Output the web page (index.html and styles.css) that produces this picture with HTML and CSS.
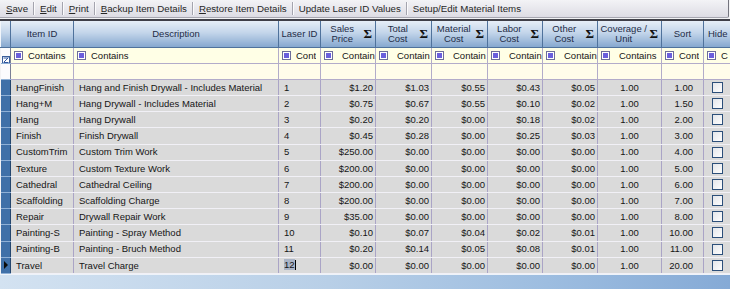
FILE: index.html
```html
<!DOCTYPE html>
<html lang="en">
<head>
<meta charset="UTF-8">
<meta name="viewport" content="width=device-width, initial-scale=1.0">
<title>Item Details</title>
<link rel="stylesheet" href="styles.css">
</head>
<body>
<div class="toolbar">
<span class="tool"><u>S</u>ave</span>
<span class="sep"></span>
<span class="tool"><u>E</u>dit</span>
<span class="sep"></span>
<span class="tool"><u>P</u>rint</span>
<span class="sep"></span>
<span class="tool"><u>B</u>ackup Item Details</span>
<span class="sep"></span>
<span class="tool"><u>R</u>estore Item Details</span>
<span class="sep"></span>
<span class="tool">Update Laser ID Values</span>
<span class="sep"></span>
<span class="tool">Setup/Edit Material Items</span>
</div>

<div class="grid-wrap">
<table class="grid">
<colgroup>
<col class="w-sel">
<col class="w-id">
<col class="w-desc">
<col class="w-laser">
<col class="w-money">
<col class="w-money2">
<col class="w-money2">
<col class="w-money">
<col class="w-money">
<col class="w-cov">
<col class="w-sort">
<col class="w-hide">
</colgroup>
<thead>
<tr class="head">
<th class="sel"></th>
<th>Item ID</th>
<th>Description</th>
<th>Laser ID</th>
<th><div class="hcell"><span>Sales<br>Price</span><b>Σ</b></div></th>
<th><div class="hcell"><span>Total<br>Cost</span><b>Σ</b></div></th>
<th><div class="hcell"><span>Material<br>Cost</span><b>Σ</b></div></th>
<th><div class="hcell"><span>Labor<br>Cost</span><b>Σ</b></div></th>
<th><div class="hcell"><span>Other<br>Cost</span><b>Σ</b></div></th>
<th><div class="hcell"><span>Coverage /<br>Unit</span><b>Σ</b></div></th>
<th>Sort</th>
<th class="left">Hide</th>
</tr>
</thead>
<tbody>
<tr class="filter">
<td class="sel sel-filter"><svg width="8" height="8" viewBox="0 0 8 8"><rect x="0.5" y="0.5" width="7" height="7" fill="#fff" stroke="#3b5f9a"/><path d="M1.5 6.5 L6.5 1.5 M1.5 2 H6 M2 6.5 H6.5" stroke="#2f56a0" stroke-width="1"/></svg></td>
<td><div class="flt"><i class="ico"></i><span>Contains</span></div></td>
<td><div class="flt"><i class="ico"></i><span>Contains</span></div></td>
<td><div class="flt"><i class="ico"></i><span>Cont</span></div></td>
<td><div class="flt wide"><i class="ico"></i><span>Contain</span></div></td>
<td><div class="flt wide"><i class="ico"></i><span>Contain</span></div></td>
<td><div class="flt wide"><i class="ico"></i><span>Contain</span></div></td>
<td><div class="flt wide"><i class="ico"></i><span>Contain</span></div></td>
<td><div class="flt wide"><i class="ico"></i><span>Contain</span></div></td>
<td><div class="flt wide"><i class="ico"></i><span>Contains</span></div></td>
<td><div class="flt"><i class="ico"></i><span>Cont</span></div></td>
<td><div class="flt"><i class="ico"></i><span>C</span></div></td>
</tr>
<tr class="new-row">
<td class="sel sel-new"></td>
<td></td><td></td><td></td><td></td><td></td><td></td><td></td><td></td><td></td><td></td><td></td>
</tr>

<tr class="row">
<td class="sel"></td>
<td>HangFinish</td>
<td>Hang and Finish Drywall - Includes Material</td>
<td>1</td>
<td class="num">$1.20</td><td class="num">$1.03</td><td class="num">$0.55</td><td class="num">$0.43</td><td class="num">$0.05</td>
<td class="cov">1.00</td><td class="sort">1.00</td>
<td><i class="chk"></i></td>
</tr>
<tr class="row">
<td class="sel"></td>
<td>Hang+M</td>
<td>Hang Drywall - Includes Material</td>
<td>2</td>
<td class="num">$0.75</td><td class="num">$0.67</td><td class="num">$0.55</td><td class="num">$0.10</td><td class="num">$0.02</td>
<td class="cov">1.00</td><td class="sort">1.50</td>
<td><i class="chk"></i></td>
</tr>
<tr class="row">
<td class="sel"></td>
<td>Hang</td>
<td>Hang Drywall</td>
<td>3</td>
<td class="num">$0.20</td><td class="num">$0.20</td><td class="num">$0.00</td><td class="num">$0.18</td><td class="num">$0.02</td>
<td class="cov">1.00</td><td class="sort">2.00</td>
<td><i class="chk"></i></td>
</tr>
<tr class="row">
<td class="sel"></td>
<td>Finish</td>
<td>Finish Drywall</td>
<td>4</td>
<td class="num">$0.45</td><td class="num">$0.28</td><td class="num">$0.00</td><td class="num">$0.25</td><td class="num">$0.03</td>
<td class="cov">1.00</td><td class="sort">3.00</td>
<td><i class="chk"></i></td>
</tr>
<tr class="row">
<td class="sel"></td>
<td>CustomTrim</td>
<td>Custom Trim Work</td>
<td>5</td>
<td class="num">$250.00</td><td class="num">$0.00</td><td class="num">$0.00</td><td class="num">$0.00</td><td class="num">$0.00</td>
<td class="cov">1.00</td><td class="sort">4.00</td>
<td><i class="chk"></i></td>
</tr>
<tr class="row">
<td class="sel"></td>
<td>Texture</td>
<td>Custom Texture Work</td>
<td>6</td>
<td class="num">$200.00</td><td class="num">$0.00</td><td class="num">$0.00</td><td class="num">$0.00</td><td class="num">$0.00</td>
<td class="cov">1.00</td><td class="sort">5.00</td>
<td><i class="chk"></i></td>
</tr>
<tr class="row">
<td class="sel"></td>
<td>Cathedral</td>
<td>Cathedral Ceiling</td>
<td>7</td>
<td class="num">$200.00</td><td class="num">$0.00</td><td class="num">$0.00</td><td class="num">$0.00</td><td class="num">$0.00</td>
<td class="cov">1.00</td><td class="sort">6.00</td>
<td><i class="chk"></i></td>
</tr>
<tr class="row">
<td class="sel"></td>
<td>Scaffolding</td>
<td>Scaffolding Charge</td>
<td>8</td>
<td class="num">$200.00</td><td class="num">$0.00</td><td class="num">$0.00</td><td class="num">$0.00</td><td class="num">$0.00</td>
<td class="cov">1.00</td><td class="sort">7.00</td>
<td><i class="chk"></i></td>
</tr>
<tr class="row">
<td class="sel"></td>
<td>Repair</td>
<td>Drywall Repair Work</td>
<td>9</td>
<td class="num">$35.00</td><td class="num">$0.00</td><td class="num">$0.00</td><td class="num">$0.00</td><td class="num">$0.00</td>
<td class="cov">1.00</td><td class="sort">8.00</td>
<td><i class="chk"></i></td>
</tr>
<tr class="row">
<td class="sel"></td>
<td>Painting-S</td>
<td>Painting - Spray Method</td>
<td>10</td>
<td class="num">$0.10</td><td class="num">$0.07</td><td class="num">$0.04</td><td class="num">$0.02</td><td class="num">$0.01</td>
<td class="cov">1.00</td><td class="sort">10.00</td>
<td><i class="chk"></i></td>
</tr>
<tr class="row">
<td class="sel"></td>
<td>Painting-B</td>
<td>Painting - Bruch Method</td>
<td>11</td>
<td class="num">$0.20</td><td class="num">$0.14</td><td class="num">$0.05</td><td class="num">$0.08</td><td class="num">$0.01</td>
<td class="cov">1.00</td><td class="sort">11.00</td>
<td><i class="chk"></i></td>
</tr>
<tr class="row current">
<td class="sel"><i class="arrow"></i></td>
<td>Travel</td>
<td>Travel Charge</td>
<td><span class="edit">12</span><i class="caret"></i></td>
<td class="num">$0.00</td><td class="num">$0.00</td><td class="num">$0.00</td><td class="num">$0.00</td><td class="num">$0.00</td>
<td class="cov">1.00</td><td class="sort">20.00</td>
<td><i class="chk"></i></td>
</tr>
</tbody>
</table>
</div>

<div class="footer"></div>
</body>
</html>
```

FILE: styles.css
```css
body {
    margin: 0;
    width: 730px;
    height: 289px;
    overflow: hidden;
    display: flex;
    flex-direction: column;
    background: #f2f2f4;
    font: 9.5px/1 "Liberation Sans", Arial, sans-serif;
    color: #151515;
}

/* toolbar */

.toolbar {
    display: flex;
    align-items: center;
    width: 727px;
    height: 17px;
    flex: none;
    padding-left: 1px;
    box-sizing: content-box;
    background: linear-gradient(#f3f3f6, #dddce4);
    border-right: 1px solid #74747e;
    border-bottom: 1px solid #a6a6b0;
    border-bottom-right-radius: 2px;
    font-size: 9.7px;
    color: #262626;
}

.tool {
    padding: 0 5px;
    white-space: nowrap;
}

.sep {
    width: 1px;
    height: 13px;
    background: #a4a4ae;
    border-right: 1px solid #fbfbfd;
}

/* grid */

.grid-wrap {
    flex: none;
    width: 730px;
    overflow: hidden;
    margin-top: 1px;
    border-top: 2px solid #3f3f48;
}

.grid {
    border-collapse: collapse;
    table-layout: fixed;
    width: 748px;
}

.w-sel { width: 10px; }
.w-id { width: 63px; }
.w-desc { width: 205px; }
.w-laser { width: 42px; }
.w-money { width: 55px; }
.w-money2 { width: 56px; }
.w-cov { width: 64px; }
.w-sort { width: 42px; }
.w-hide { width: 45px; }

.grid th,
.grid td {
    padding: 0;
    white-space: nowrap;
    overflow: hidden;
}

.head th {
    height: 26px;
    background: linear-gradient(#e6eef7, #c3d5ea 45%, #86a8cf);
    border-left: 1px solid #f2f6fb;
    border-right: 1px solid #4f729c;
    border-bottom: 1px solid #4f729c;
    font-weight: normal;
    font-size: 9.5px;
    color: #1e2c46;
    text-align: center;
    line-height: 10px;
}

.head th.left {
    text-align: left;
    padding-left: 4px;
}

.hcell {
    display: flex;
    align-items: center;
    padding-right: 3px;
}

.hcell span {
    flex: 1;
    text-align: center;
}

.hcell b {
    font: bold 13px "Liberation Serif", serif;
    color: #111;
}

.filter td {
    height: 15px;
    background: #ffffe6;
    border: 1px solid #b2acca;
}

.flt {
    display: flex;
    align-items: center;
    padding-left: 3px;
}

.flt span {
    margin-left: 5px;
    overflow: hidden;
}

.flt.wide span {
    margin-left: 9px;
}

.ico {
    flex: none;
    width: 7px;
    height: 7px;
    border: 1px solid #6e6e9a;
    background: #6b5fdc;
    box-shadow: inset 0 0 0 1px #fff;
}

.new-row td {
    height: 15px;
    background: #fffdea;
    border: 1px solid #b2acca;
}

.row td {
    height: 15.17px;
    background: #dadada;
    border-left: 1px solid #aaa4c6;
    border-right: 1px solid #aaa4c6;
    border-bottom: 1px solid #f1f0f6;
    padding: 0 1px 0 5px;
}

.row td.num {
    text-align: right;
    padding-right: 2px;
}

.row td.cov {
    text-align: center;
    padding: 0;
}

.row td.sort {
    text-align: right;
    padding-right: 10px;
}

.grid td.sel {
    padding: 0;
    background: #3f70a8;
    border-left: none;
    border-right: 1px solid #24466e;
    border-bottom: 1px solid #8fb0d6;
}

.grid td.sel-filter {
    background: #fbfbfd;
    border-right: 1px solid #7a7f96;
    vertical-align: bottom;
    line-height: 0;
}

.grid td.sel-new {
    background: #fbfbfd;
    border-right: 1px solid #7a7f96;
}

.sel svg {
    display: block;
    margin: 0 0 -1px 1px;
}

.chk {
    display: block;
    width: 9px;
    height: 9px;
    margin-left: 3px;
    border: 1px solid #2c4f7a;
    background: linear-gradient(135deg, #e4e6ea, #fdfdfd);
}

.arrow {
    display: block;
    width: 0;
    height: 0;
    margin-left: 3px;
    border-top: 4px solid transparent;
    border-bottom: 4px solid transparent;
    border-left: 4px solid #0c0c0c;
}

.edit {
    background: #aab4c6;
}

.caret {
    display: inline-block;
    width: 1px;
    height: 10px;
    background: #000;
    vertical-align: -2px;
}

.footer {
    flex: 1;
    border-top: 1px solid #eef3f9;
    background: linear-gradient(90deg, #d3e2f1, #b8cfe7 45%, #9dbde0 75%, #85aad6);
}
```
